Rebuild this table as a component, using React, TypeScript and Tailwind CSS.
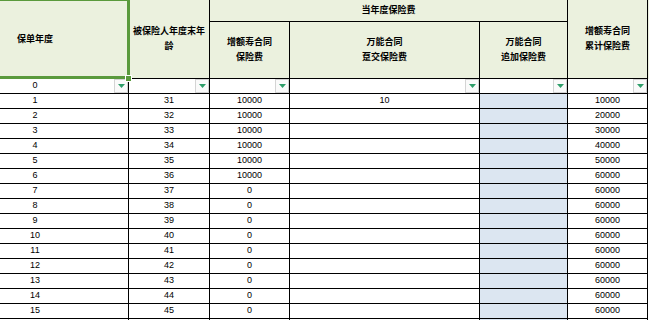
const rows: [number, number, string, string, string][] = [
  [1, 31, "10000", "10", "10000"],
  [2, 32, "10000", "", "20000"],
  [3, 33, "10000", "", "30000"],
  [4, 34, "10000", "", "40000"],
  [5, 35, "10000", "", "50000"],
  [6, 36, "10000", "", "60000"],
  [7, 37, "0", "", "60000"],
  [8, 38, "0", "", "60000"],
  [9, 39, "0", "", "60000"],
  [10, 40, "0", "", "60000"],
  [11, 41, "0", "", "60000"],
  [12, 42, "0", "", "60000"],
  [13, 43, "0", "", "60000"],
  [14, 44, "0", "", "60000"],
  [15, 45, "0", "", "60000"],
];

const cell = "border-r border-b border-black flex items-center justify-center";
const head = "bg-[#ebf1de] border-r border-b border-black flex items-center justify-center text-center font-bold text-[9px] leading-[15px]";

function FilterButton() {
  return (
    <div className="ml-auto h-[14px] w-[14px] border border-[#d4d4d4] bg-[#fafafa] flex items-center justify-center">
      <svg width="7" height="4" viewBox="0 0 7 4">
        <path d="M0 0 H7 L3.5 4 Z" fill="#2f9e6a" />
      </svg>
    </div>
  );
}

export default function App() {
  return (
    <div
      className="w-[649px] h-[320px] overflow-hidden bg-white text-black text-[9px]"
      style={{ fontFamily: '"Liberation Sans", "Noto Sans CJK SC", sans-serif' }}
    >
      <div className="relative grid grid-cols-[129px_81px_80px_190px_88px_80px_1fr] grid-rows-[22px_57px_repeat(17,15px)]">
        {/* header */}
        <div className={`${head} row-span-2 justify-start`}>
          <div className="w-[70px] text-center">保单年度</div>
        </div>
        <div className={`${head} row-span-2 px-1`}>被保险人年度末年龄</div>
        <div className={`${head} col-span-3`}>当年度保险费</div>
        <div className={`${head} row-span-2`}>
          增额寿合同
          <br />
          累计保险费
        </div>
        <div className="bg-[#ebf1de] row-span-2" />
        <div className={head}>
          增额寿合同
          <br />
          保险费
        </div>
        <div className={head}>
          万能合同
          <br />
          趸交保险费
        </div>
        <div className={head}>
          万能合同
          <br />
          追加保险费
        </div>

        {/* filter row */}
        <div className={`${cell} justify-start`}>
          <div className="w-[70px] text-center">0</div>
          <FilterButton />
        </div>
        <div className={cell}>
          <FilterButton />
        </div>
        <div className={cell}>
          <FilterButton />
        </div>
        <div className={cell}>
          <FilterButton />
        </div>
        <div className={cell}>
          <FilterButton />
        </div>
        <div className={cell}>
          <FilterButton />
        </div>
        <div />

        {rows.map(([year, age, premium, lump, total]) => (
          <div key={year} className="contents">
            <div className={`${cell} justify-start`}>
              <div className="w-[70px] text-center">{year}</div>
            </div>
            <div className={cell}>{age}</div>
            <div className={cell}>{premium}</div>
            <div className={cell}>{lump}</div>
            <div className={`${cell} bg-[#dce6f1]`} />
            <div className={cell}>{total}</div>
            <div />
          </div>
        ))}
        <div className={cell} />
        <div className={cell} />
        <div className={cell} />
        <div className={cell} />
        <div className={`${cell} bg-[#dce6f1]`} />
        <div className={cell} />
        <div />

        {/* selected cell outline */}
        <div className="absolute left-[-3px] top-[-2px] w-[133px] h-[81px] border-[3px] border-t-[3px] border-[#5a9a3c] pointer-events-none" />
        <div className="absolute left-[126px] top-[76px] w-[5px] h-[5px] bg-[#5a9a3c] outline outline-1 outline-white" />
      </div>
    </div>
  );
}
